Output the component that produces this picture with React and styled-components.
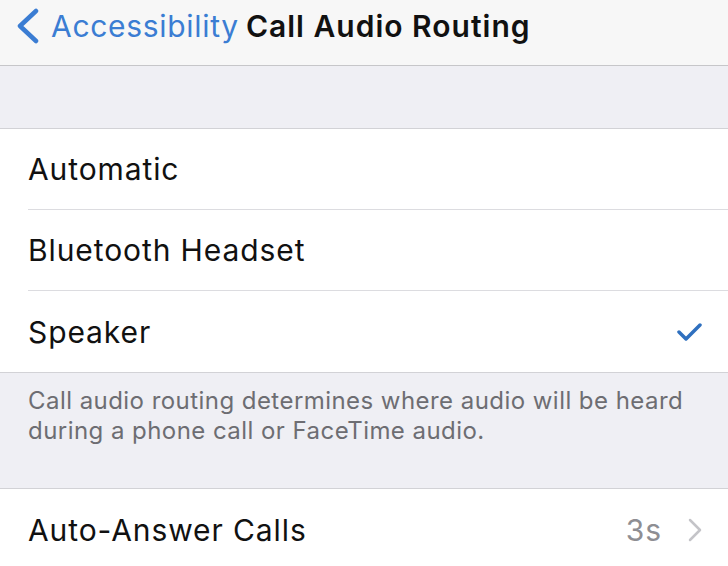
import React from 'react';
import styled, { createGlobalStyle } from 'styled-components';

const GlobalStyle = createGlobalStyle`
  html, body {
    margin: 0;
    padding: 0;
    background: #efeff4;
    font-family: Inter, "Liberation Sans", sans-serif;
    -webkit-font-smoothing: antialiased;
  }
`;

const Screen = styled.div`
  width: 728px;
  height: 566px;
  overflow: hidden;
  background: #efeff4;
`;

const NavBar = styled.header`
  height: 66px;
  box-sizing: border-box;
  display: flex;
  align-items: center;
  padding: 0 0 14px 14px;
  background: #f7f7f7;
  border-bottom: 1px solid #c6c6c9;
`;

const BackLink = styled.a`
  display: flex;
  align-items: center;
  gap: 11px;
  color: #3b7dd3;
  font-size: 30px;
  letter-spacing: 0.7px;
  text-decoration: none;
  margin-right: 7px;
`;

const Title = styled.h1`
  margin: 0;
  font-size: 30px;
  font-weight: 600;
  letter-spacing: 1px;
  color: #111;
`;

const Spacer = styled.div`
  height: 62px;
`;

const Group = styled.section`
  background: #fff;
  border-top: 1px solid #d2d2d6;
  border-bottom: 1px solid #d2d2d6;
`;

const Row = styled.div`
  height: 81px;
  box-sizing: border-box;
  display: flex;
  align-items: center;
  margin-left: 28px;
  padding-right: 26px;
  font-size: 30px;
  letter-spacing: 0.9px;
  color: #111;
  ${p => !p.last && 'border-bottom: 1px solid #dcdce0;'}
`;

const Label = styled.span`
  flex: 1;
`;

const Detail = styled.span`
  color: #8e8e93;
  margin-right: 26px;
`;

const Footer = styled.p`
  margin: 0;
  height: 115px;
  box-sizing: border-box;
  padding: 13px 28px 0;
  font-size: 24px;
  letter-spacing: 0.45px;
  line-height: 30px;
  color: #6d6d72;
`;

const Chevron = () => (
  <svg width="26" height="36" viewBox="0 0 26 36">
    <path d="M22 3 L6 18 L22 33" fill="none" stroke="#3b7dd3" strokeWidth="4.5" strokeLinecap="round" strokeLinejoin="round" />
  </svg>
);

const Check = () => (
  <svg width="26" height="20" viewBox="0 0 26 20">
    <path d="M3 10 L10 17 L24 3" fill="none" stroke="#2f70bf" strokeWidth="3.5" strokeLinecap="round" strokeLinejoin="round" />
  </svg>
);

const Disclosure = () => (
  <svg width="14" height="24" viewBox="0 0 14 24">
    <path d="M2 2 L12 12 L2 22" fill="none" stroke="#c4c4c8" strokeWidth="2.5" strokeLinecap="round" strokeLinejoin="round" />
  </svg>
);

const routes = ['Automatic', 'Bluetooth Headset', 'Speaker'];

export default function App() {
  const selected = 'Speaker';
  return (
    <Screen>
      <GlobalStyle />
      <NavBar>
        <BackLink href="#">
          <Chevron />
          Accessibility
        </BackLink>
        <Title>Call Audio Routing</Title>
      </NavBar>
      <Spacer />
      <Group>
        {routes.map((r, i) => (
          <Row key={r} last={i === routes.length - 1}>
            <Label>{r}</Label>
            {r === selected && <Check />}
          </Row>
        ))}
      </Group>
      <Footer>
        Call audio routing determines where audio will be heard during a phone call or FaceTime audio.
      </Footer>
      <Group>
        <Row last>
          <Label>Auto-Answer Calls</Label>
          <Detail>3s</Detail>
          <Disclosure />
        </Row>
      </Group>
    </Screen>
  );
}
